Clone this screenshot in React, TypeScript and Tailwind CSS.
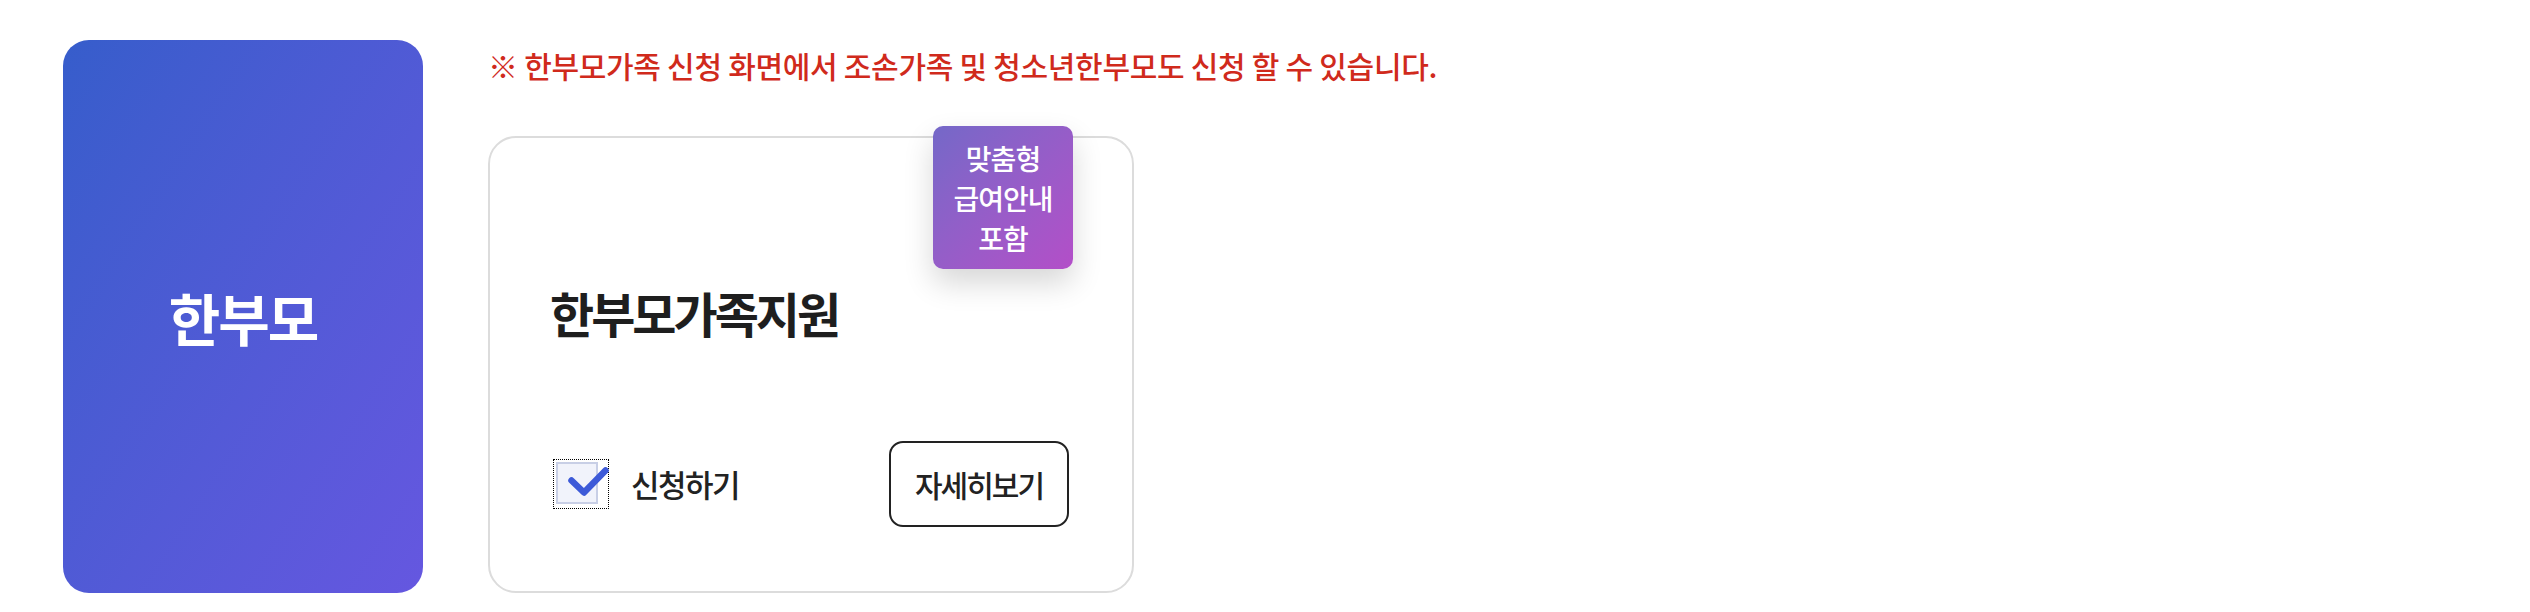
import React from 'react';

const FONT = "font-['Noto_Sans_CJK_KR','Noto_Sans',sans-serif]";

function CheckBox() {
  return (
    <div className="relative w-[56px] h-[50px] border border-dotted border-black shrink-0">
      <div className="absolute left-[2px] top-[2px] w-[42px] h-[42px] border-2 border-[#c8cfe6] bg-[#f1f3fb]" />
      <svg className="absolute left-0 top-0 blur-[0.4px]" width="56" height="50" viewBox="0 0 56 50">
        <polyline
          points="17.5,20.5 30,32.5 51.5,10.5"
          fill="none"
          stroke="#3d5ad8"
          strokeWidth="6.5"
          strokeLinecap="round"
          strokeLinejoin="round"
        />
      </svg>
    </div>
  );
}

export default function App() {
  return (
    <div className={`${FONT} w-full h-[612px] bg-white flex gap-[65px] pl-[63px] pt-[40px]`}>
      {/* 카테고리 카드 */}
      <div className="w-[360px] h-[553px] rounded-[26px] bg-linear-to-br from-[#365dcb] to-[#6557e0] flex items-center justify-center">
        <span className="text-white font-bold text-[56px] tracking-[-2px] leading-none">한부모</span>
      </div>

      <div className="flex flex-col">
        <p className="text-[#d02a1c] text-[30px] font-medium tracking-[-0.3px] leading-[40px] mt-[5px]">
          ※ 한부모가족 신청 화면에서 조손가족 및 청소년한부모도 신청 할 수 있습니다.
        </p>

        {/* 서비스 카드 */}
        <div className="relative mt-[51px] w-[646px] h-[457px] border-2 border-[#dcdcdc] rounded-[28px] bg-white flex flex-col pl-[60px] pr-[63px] pt-[142px] pb-[64px]">
          <div className="absolute right-[59px] top-[-12px] w-[140px] h-[143px] rounded-[10px] bg-linear-to-br from-[#7468c8] to-[#b34ec8] shadow-[0_14px_30px_rgba(0,0,0,0.16)] flex flex-col items-center justify-center text-white text-[28px] font-medium leading-[40px] tracking-[-1px]">
            <span>맞춤형</span>
            <span>급여안내</span>
            <span>포함</span>
          </div>

          <h2 className="text-[48px] font-bold tracking-[-3px] text-[#1e1e1e] leading-[64px]">한부모가족지원</h2>

          <div className="mt-auto flex items-center justify-between pl-[3px]">
            <label className="flex items-center gap-[22px]">
              <CheckBox />
              <span className="text-[31px] font-medium tracking-[-1.5px] text-[#222]">신청하기</span>
            </label>
            <button className="w-[180px] h-[86px] border-2 border-[#222] rounded-[14px] text-[30px] font-medium tracking-[-2px] text-[#222]">
              자세히보기
            </button>
          </div>
        </div>
      </div>
    </div>
  );
}
